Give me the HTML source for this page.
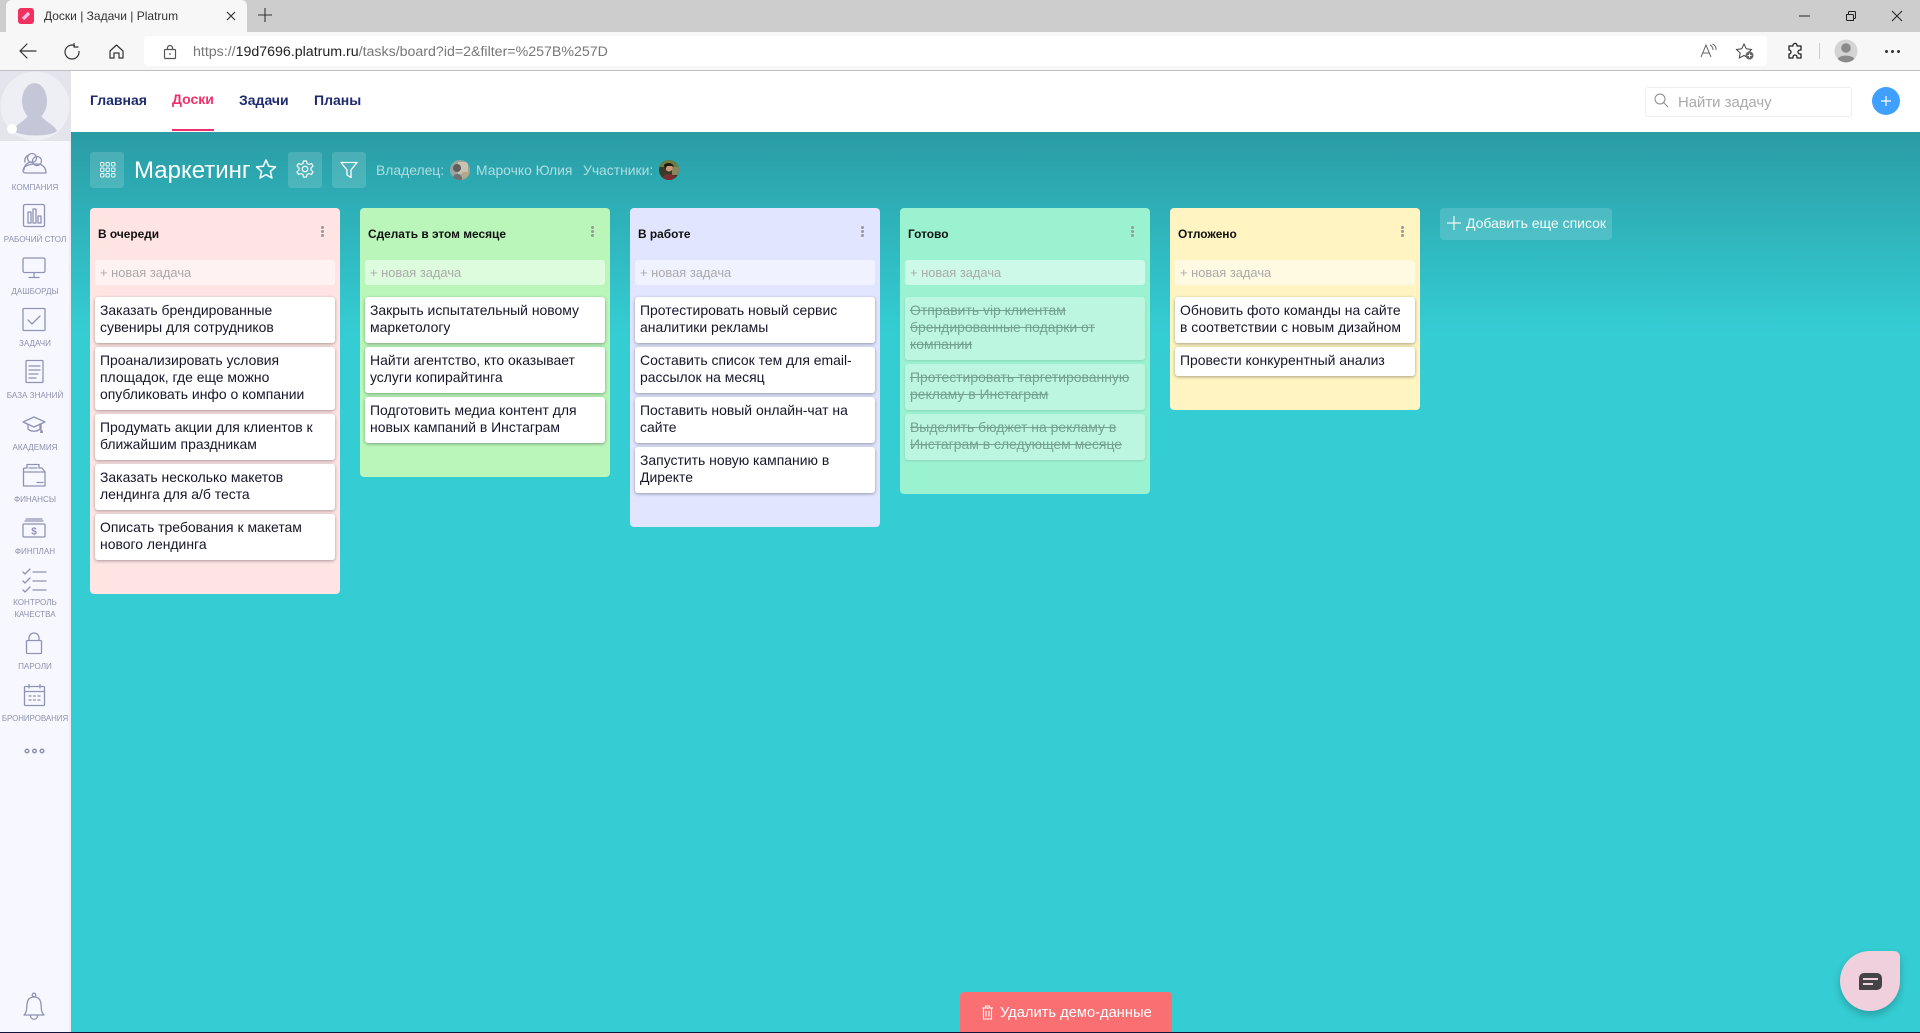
<!DOCTYPE html>
<html lang="ru"><head><meta charset="utf-8"><title>Доски | Задачи | Platrum</title>
<style>
*{box-sizing:border-box}
html,body{margin:0;padding:0;width:1920px;height:1033px;overflow:hidden;background:#34cdd3;font-family:"Liberation Sans","DejaVu Sans",sans-serif}
.a{position:absolute}
svg{position:absolute;overflow:visible}
.s{fill:none;stroke:#8f92b5;stroke-width:1.3;stroke-linecap:round;stroke-linejoin:round}
.b{fill:none;stroke:#333;stroke-width:1.2;stroke-linecap:round;stroke-linejoin:round}
.lbl{position:absolute;left:0;width:70px;text-align:center;font-size:8.1px;line-height:12px;color:#8f91ae;white-space:nowrap}
.nav{position:absolute;top:92px;font-size:14px;font-weight:bold;color:#1e2b70;line-height:16px}
.list{position:absolute;top:208px;width:250px;border-radius:4px}
.title{position:absolute;left:8px;top:19px;font-size:11.9px;line-height:14px;font-weight:bold;color:#111}
.kb{position:absolute;left:231px;top:18px;width:3px;height:3px;border-radius:50%;background:#999;box-shadow:0 4px 0 #999,0 8px 0 #999}
.new{position:absolute;left:5px;top:52px;width:240px;height:25px;border-radius:3px;background:rgba(255,255,255,.5);padding-left:5px;font-size:12.9px;line-height:25px;color:#aaa}
.cards{position:absolute;left:5px;top:89px;width:240px}
.c{background:#fff;border-radius:3px;box-shadow:0 1px 3px rgba(0,0,0,.35);padding:5px 5px 7px 5px;margin-bottom:4px;font-size:13.95px;line-height:17px;color:#16162a}
.d .c{background:#bdf6e0;color:#74a291;text-decoration:line-through;box-shadow:0 1px 2px rgba(0,0,0,.12)}
.hb{position:absolute;top:152px;width:34px;height:36px;border-radius:3px;background:rgba(255,255,255,.15)}
.ht{position:absolute;top:162px;font-size:13.9px;line-height:16px;color:rgba(255,255,255,.62);white-space:nowrap}
</style></head><body>

<!-- browser chrome -->
<div class="a" style="left:0;top:0;width:1920px;height:32px;background:#cdcdcd"></div>
<div class="a" style="left:6px;top:0;width:241px;height:32px;background:#f7f7f7;border-radius:6px 6px 0 0"></div>
<div class="a" style="left:18px;top:8px;width:16px;height:16px;border-radius:3px;background:#f0305f"></div>
<svg style="left:18px;top:8px" width="16" height="16"><path d="M5 11L11 5" stroke="#fbd" stroke-width="3.4"/></svg>
<div class="a" style="left:44px;top:9px;font-size:12px;line-height:15px;color:#333;white-space:nowrap">Доски | Задачи | Platrum</div>
<svg style="left:226px;top:11px" width="10" height="10"><path d="M1 1L9 9M9 1L1 9" stroke="#333" stroke-width="1.2" fill="none"/></svg>
<svg style="left:258px;top:8px" width="14" height="14"><path d="M7 0V14M0 7H14" stroke="#333" stroke-width="1.1" fill="none"/></svg>
<svg style="left:1799px;top:15px" width="12" height="2"><path d="M0 1H11" stroke="#222" stroke-width="1"/></svg>
<svg style="left:1846px;top:11px" width="10" height="10"><path d="M.5 3.5h6a1 1 0 0 1 1 1v5h-6a1 1 0 0 1-1-1zM2.500 3.500V1.500a1 1 0 0 1 1-1h5a1 1 0 0 1 1 1v5a1 1 0 0 1-1 1h-1" stroke="#222" stroke-width="1" fill="none"/></svg>
<svg style="left:1892px;top:11px" width="10" height="10"><path d="M0 0L10 10M10 0L0 10" stroke="#222" stroke-width="1" fill="none"/></svg>

<div class="a" style="left:0;top:32px;width:1920px;height:38px;background:#f7f7f7"></div>
<div class="a" style="left:0;top:70px;width:1920px;height:1px;background:#bfbfbf"></div>
<div class="a" style="left:144px;top:36px;width:1623px;height:30px;background:#fff;border-radius:4px"></div>
<svg style="left:19px;top:43px" width="18" height="16"><path d="M1 8H17M8 1L1 8L8 15" class="b" stroke-width="1.3"/></svg>
<svg style="left:64px;top:43px" width="16" height="17"><path d="M10.500 2.500A7 7 0 1 0 15 8.500M10 0.500V4H14" class="b"/></svg>
<svg style="left:109px;top:44px" width="15" height="15"><path d="M1 7L7.500 1L14 7V14H10V9H5V14H1Z" class="b"/></svg>
<svg style="left:164px;top:45px" width="12" height="14"><rect x=".5" y="4.500" width="11" height="9" rx="1" class="b" style="stroke:#555"/><path d="M3.500 4.500V3a2.500 2.500 0 0 1 5 0V4.500" class="b" style="stroke:#555"/><circle cx="6" cy="9" r=".9" fill="#555"/></svg>
<div class="a" style="left:193px;top:44px;font-size:14.2px;line-height:16px;color:#777;white-space:nowrap">https://<span style="color:#222">19d7696.platrum.ru</span>/tasks/board?id=2&amp;filter=%257B%257D</div>
<svg style="left:1700px;top:43px" width="18" height="16"><path d="M1 14L6 2L11 14M3 10H9" fill="none" stroke="#666" stroke-width="1"/><path d="M10 2C12 3 13 5 13 7M12.500 1C15 2 16.500 4.500 16 7" fill="none" stroke="#666" stroke-width="1"/></svg>
<svg style="left:1735px;top:42px" width="20" height="18"><path d="M9 2L11.300 6.800L16.500 7.500L12.800 11L13.700 16L9 13.500L4.300 16L5.200 11L1.500 7.500L6.700 6.800Z" fill="none" stroke="#444" stroke-width="1"/><circle cx="14.500" cy="13.500" r="4" fill="#666"/><path d="M12.500 13.500H16.500M14.500 11.500V15.500" stroke="#fff" stroke-width="1"/></svg>
<svg style="left:1788px;top:43px" width="15" height="16"><path d="M5 3a2 2 0 0 1 4-1V3h4v4h-1a2 2 0 0 0 0 4h1v4H9v-1a2 2 0 0 0-4 0v1H1v-4a2 2 0 0 0 0-4V3z" fill="none" stroke="#222" stroke-width="1.3" stroke-linejoin="round"/></svg>
<div class="a" style="left:1819px;top:43px;width:1px;height:16px;background:#ccc"></div>
<svg style="left:1834px;top:39px" width="24" height="24"><circle cx="12" cy="12" r="11.500" fill="#d4d4d4"/><circle cx="12" cy="9" r="4.800" fill="#8a8a8a"/><path d="M3.800 20C5 15.500 19 15.500 20.200 20A11.500 11.500 0 0 1 3.800 20Z" fill="#8a8a8a"/></svg>
<div class="a" style="left:1885px;top:50px;width:3px;height:3px;border-radius:50%;background:#333;box-shadow:6px 0 0 #333,12px 0 0 #333"></div>

<!-- board background -->
<div class="a" style="left:71px;top:132px;width:1849px;height:900px;background:linear-gradient(#2a9ca5 0,#34cdd3 200px,#34cdd3 100%)"></div>

<!-- white header -->
<div class="a" style="left:71px;top:71px;width:1849px;height:61px;background:#fff"></div>
<div class="nav" style="left:90px">Главная</div>
<div class="nav" style="left:172px;top:91px;color:#f0306a">Доски</div>
<div class="a" style="left:172px;top:129px;width:42px;height:2px;background:#f0306a"></div>
<div class="nav" style="left:239px">Задачи</div>
<div class="nav" style="left:314px">Планы</div>
<div class="a" style="left:1645px;top:87px;width:207px;height:30px;border:1px solid #eee;border-radius:3px;background:#fff"></div>
<svg style="left:1654px;top:93px" width="15" height="15"><circle cx="6" cy="6" r="5" fill="none" stroke="#888" stroke-width="1"/><path d="M9.700 9.700L14 14" stroke="#888" stroke-width="1"/></svg>
<div class="a" style="left:1678px;top:94px;font-size:14.9px;line-height:18px;color:#aaa;white-space:nowrap">Найти задачу</div>
<div class="a" style="left:1872px;top:87px;width:28px;height:28px;border-radius:50%;background:#3fa0ff"></div>
<svg style="left:1881px;top:96px" width="10" height="10"><path d="M5 0V10M0 5H10" stroke="#fff" stroke-width="1.200"/></svg>

<!-- sidebar -->
<div class="a" style="left:0;top:71px;width:71px;height:961px;background:#f7f8ff;border-right:2px solid #eceef6"></div>
<div class="a" style="left:0;top:71px;width:71px;height:70px;background:#e4e5ec;overflow:hidden">
<svg style="left:0;top:0" width="71" height="70"><circle cx="35" cy="35" r="34.500" fill="#eeeff5"/><ellipse cx="34.500" cy="30" rx="12.500" ry="18" fill="#c5c7d8"/><path d="M13 60C16 52 27 50 29 42H40C42 50 53 52 57 60C50 66 22 66 13 60Z" fill="#c5c7d8"/><circle cx="12" cy="58" r="5" fill="#fff"/></svg>
</div>

<svg style="left:0;top:0" width="71" height="1033">
<!-- компания -->
<g class="s"><circle cx="32" cy="158" r="4.500"/><circle cx="37" cy="161" r="4.500" /><path d="M24 170c0-5 4-8 8-8"/><path d="M23 171c0-6 7-7 14-7 6 0 9 4 9 9H26c-2 0-3-1-3-2z"/><path d="M29 155c-3 1-5 4-4 7"/></g>
<!-- рабочий стол -->
<g class="s"><rect x="23.500" y="204.500" width="21" height="22" rx="1.500"/><rect x="28" y="212" width="3" height="11"/><rect x="33" y="209" width="3" height="14"/><rect x="38" y="216" width="3" height="7"/></g>
<!-- дашборды -->
<g class="s"><rect x="23" y="258" width="22" height="14.500" rx="1.500"/><path d="M34 272.500V277M29 277.500H39"/></g>
<!-- задачи -->
<g class="s"><rect x="23" y="308.500" width="22" height="22" rx="1"/><path d="M28 320L32 324L40 316"/></g>
<!-- база -->
<g class="s"><rect x="26" y="360.500" width="17" height="22" rx="1"/><path d="M29 366H40M29 370H40M29 374H38M29 378H36"/></g>
<!-- академия -->
<g class="s"><path d="M23 422L34 417L45 422L34 427Z"/><path d="M28 424V429C31 432 37 432 40 429V424"/><path d="M41 424V431" /></g>
<path d="M40.500 430h2l.5 3h-3z" fill="#8f92b5"/>
<!-- финансы -->
<g class="s"><path d="M23.500 472V486H45V472Z"/><path d="M23.500 472V469C23.500 468 24.500 468 25 468H27V464.500H39V468H42L45 472"/><path d="M37 482.500H43"/><path d="M29 468H37"/></g>
<!-- финплан -->
<g class="s"><rect x="23" y="524" width="22" height="13" rx="1"/><path d="M25 521H43M26 519H42"/></g>
<text x="34" y="534.500" text-anchor="middle" font-size="10" fill="#8f92b5" font-family="Liberation Sans" font-weight="bold">$</text>
<!-- контроль -->
<g class="s"><path d="M23 572L25 574L30 569M33 572H46M23 581L25 583L30 578M33 581H46M23 590L25 592L30 587M33 590H46"/></g>
<!-- пароли -->
<g class="s"><rect x="26.500" y="640.500" width="15" height="13" rx="1"/><path d="M29 640.500V638a5 5 0 0 1 10 0V640.500"/></g>
<!-- бронирования -->
<g class="s"><rect x="24.500" y="686.500" width="20" height="19" rx="1"/><path d="M24.500 691.500H44.500M29 684.500V688M40 684.500V688"/><path d="M29 696H31M33.500 696H35.500M38 696H40M29 700H31M33.500 700H35.500M38 700H40"/></g>
<!-- dots -->
<g fill="none" stroke="#8f92b5" stroke-width="1.500"><circle cx="27" cy="751" r="1.800"/><circle cx="34.500" cy="751" r="1.800"/><circle cx="42" cy="751" r="1.800"/></g>
<!-- bell -->
<g class="s" style="stroke-width:1.300"><path d="M24 1015C27 1012 26.500 1009 27 1004C27.500 999 30 997 34 997C38 997 40.500 999 41 1004C41.500 1009 41 1012 44 1015Z"/><circle cx="34" cy="995" r="1.800"/><path d="M30.500 1015.500C30.500 1020.500 37.500 1020.500 37.500 1015.500"/></g>
</svg>
<div class="lbl" style="top:182px">КОМПАНИЯ</div>
<div class="lbl" style="top:234px">РАБОЧИЙ СТОЛ</div>
<div class="lbl" style="top:286px">ДАШБОРДЫ</div>
<div class="lbl" style="top:338px">ЗАДАЧИ</div>
<div class="lbl" style="top:390px">БАЗА ЗНАНИЙ</div>
<div class="lbl" style="top:442px">АКАДЕМИЯ</div>
<div class="lbl" style="top:494px">ФИНАНСЫ</div>
<div class="lbl" style="top:546px">ФИНПЛАН</div>
<div class="lbl" style="top:597px">КОНТРОЛЬ<br>КАЧЕСТВА</div>
<div class="lbl" style="top:661px">ПАРОЛИ</div>
<div class="lbl" style="top:713px;font-size:7.9px">БРОНИРОВАНИЯ</div>

<!-- board header -->
<div class="hb" style="left:90px"></div>
<svg style="left:100px;top:162px" width="16" height="16" fill="none" stroke="#fff" stroke-width="1" opacity=".9">
<rect x=".5" y=".5" width="3.500" height="3.500" rx="1"/><rect x="6" y=".5" width="3.500" height="3.500" rx="1"/><rect x="11.500" y=".5" width="3.500" height="3.500" rx="1"/>
<rect x=".5" y="6" width="3.500" height="3.500" rx="1"/><rect x="6" y="6" width="3.500" height="3.500" rx="1"/><rect x="11.500" y="6" width="3.500" height="3.500" rx="1"/>
<rect x=".5" y="11.500" width="3.500" height="3.500" rx="1"/><rect x="6" y="11.500" width="3.500" height="3.500" rx="1"/><rect x="11.500" y="11.500" width="3.500" height="3.500" rx="1"/></svg>
<div class="a" style="left:134px;top:156px;font-size:24px;line-height:30px;color:#fff;white-space:nowrap">Маркетинг</div>
<svg style="left:255px;top:158px" width="22" height="22"><path d="M11 2L13.700 8.200L20.500 8.900L15.400 13.400L16.900 20L11 16.600L5.100 20L6.600 13.400L1.500 8.900L8.300 8.200Z" fill="none" stroke="#fff" stroke-width="1.500" stroke-linejoin="round"/></svg>
<div class="hb" style="left:288px"></div>
<svg style="left:296px;top:160px" width="18" height="18" fill="none" stroke="#fff" stroke-width="1.200"><path d="M7.500 1H10.500L11 3.500L13 4.500L15.500 3.500L17 6L15 8V10L17 12L15.500 14.500L13 13.500L11 14.500L10.500 17H7.500L7 14.500L5 13.500L2.500 14.500L1 12L3 10V8L1 6L2.500 3.500L5 4.500L7 3.500Z" stroke-linejoin="round"/><circle cx="9" cy="9" r="2.800"/></svg>
<div class="hb" style="left:332px"></div>
<svg style="left:340px;top:161px" width="18" height="18"><path d="M1 1.500H17L11 9V16.500L7 14V9Z" fill="none" stroke="#fff" stroke-width="1.300" stroke-linejoin="round"/></svg>
<div class="ht" style="left:376px">Владелец:</div>
<svg style="left:450px;top:160px" width="20" height="20"><defs><clipPath id="c1"><circle cx="10" cy="10" r="10"/></clipPath><clipPath id="c2"><circle cx="10" cy="10" r="10"/></clipPath></defs><g clip-path="url(#c1)"><rect width="20" height="20" fill="#9aa5a3"/><rect x="8" y="2" width="10" height="12" fill="#c9c2ae"/><circle cx="7" cy="8" r="4" fill="#5d5f5c"/><path d="M2 20C3 12 11 12 13 20Z" fill="#6d7373"/><rect x="12" y="12" width="8" height="8" fill="#b3a88a"/></g></svg>
<div class="ht" style="left:476px">Марочко Юлия</div>
<div class="ht" style="left:583px">Участники:</div>
<svg style="left:659px;top:160px" width="20" height="20"><g clip-path="url(#c2)"><rect width="20" height="20" fill="#3a3a28"/><rect x="0" y="0" width="20" height="7" fill="#6d7e45"/><rect x="13" y="7" width="7" height="8" fill="#8a8660"/><circle cx="10" cy="8" r="3.500" fill="#c89a78"/><path d="M3 20C3 12 17 12 17 20Z" fill="#7a2f2f"/><path d="M5 5C7 2 14 2 15 7L13 6L8 6L6 10Z" fill="#22180f"/></g></svg>

<!-- lists -->
<div class="list" style="left:90px;height:386px;background:#ffe4e4">
<div class="title">В очереди</div><div class="kb"></div><div class="new">+ новая задача</div>
<div class="cards">
<div class="c">Заказать брендированные сувениры для сотрудников</div>
<div class="c">Проанализировать условия площадок, где еще можно опубликовать инфо о компании</div>
<div class="c">Продумать акции для клиентов к ближайшим праздникам</div>
<div class="c">Заказать несколько макетов лендинга для а/б теста</div>
<div class="c">Описать требования к макетам нового лендинга</div>
</div></div>

<div class="list" style="left:360px;height:269px;background:#baf6ba">
<div class="title">Сделать в этом месяце</div><div class="kb"></div><div class="new">+ новая задача</div>
<div class="cards">
<div class="c">Закрыть испытательный новому маркетологу</div>
<div class="c">Найти агентство, кто оказывает услуги копирайтинга</div>
<div class="c">Подготовить медиа контент для новых кампаний в Инстаграм</div>
</div></div>

<div class="list" style="left:630px;height:319px;background:#e1e5ff">
<div class="title">В работе</div><div class="kb"></div><div class="new">+ новая задача</div>
<div class="cards">
<div class="c">Протестировать новый сервис аналитики рекламы</div>
<div class="c">Составить список тем для email-рассылок на месяц</div>
<div class="c">Поставить новый онлайн-чат на сайте</div>
<div class="c">Запустить новую кампанию в Директе</div>
</div></div>

<div class="list d" style="left:900px;height:286px;background:#9af2d1">
<div class="title">Готово</div><div class="kb"></div><div class="new">+ новая задача</div>
<div class="cards">
<div class="c">Отправить vip клиентам брендированные подарки от компании</div>
<div class="c">Протестировать таргетированную рекламу в Инстаграм</div>
<div class="c">Выделить бюджет на рекламу в Инстаграм в следующем месяце</div>
</div></div>

<div class="list" style="left:1170px;height:202px;background:#fff4c2">
<div class="title">Отложено</div><div class="kb"></div><div class="new">+ новая задача</div>
<div class="cards">
<div class="c">Обновить фото команды на сайте в соответствии с новым дизайном</div>
<div class="c">Провести конкурентный анализ</div>
</div></div>

<div class="a" style="left:1440px;top:208px;width:172px;height:32px;border-radius:4px;background:rgba(255,255,255,.15)"></div>
<svg style="left:1447px;top:216px" width="14" height="14"><path d="M7 0V14M0 7H14" stroke="#fff" stroke-width="1.200" opacity=".9"/></svg>
<div class="a" style="left:1466px;top:215px;font-size:14px;line-height:17px;color:#fff;white-space:nowrap;opacity:.95">Добавить еще список</div>

<!-- bottom -->
<div class="a" style="left:960px;top:992px;width:212px;height:40px;border-radius:4px 4px 0 0;background:#f96f72"></div>
<svg style="left:981px;top:1005px" width="13" height="15" fill="none" stroke="#fff" stroke-width="1.100"><path d="M1 3H12M4.500 3V1H8.500V3M2.500 3V14H10.500V3M5 6V11.500M8 6V11.500"/></svg>
<div class="a" style="left:1000px;top:1005px;font-size:14.7px;line-height:17px;color:#fff;white-space:nowrap">Удалить демо-данные</div>

<div class="a" style="left:1840px;top:951px;width:60px;height:60px;border-radius:30px 6px 30px 30px;background:#f0d0dc;box-shadow:0 4px 8px rgba(0,0,0,.22)"></div>
<div class="a" style="left:1859px;top:973px;width:23px;height:17px;border-radius:5px 5px 5px 1px;background:#444"></div>
<div class="a" style="left:1863px;top:978px;width:15px;height:2px;background:#f0d0dc"></div>
<div class="a" style="left:1863px;top:983px;width:10px;height:2px;background:#f0d0dc"></div>

<div class="a" style="left:0;top:1032px;width:1920px;height:1px;background:#10143a"></div>
</body></html>
